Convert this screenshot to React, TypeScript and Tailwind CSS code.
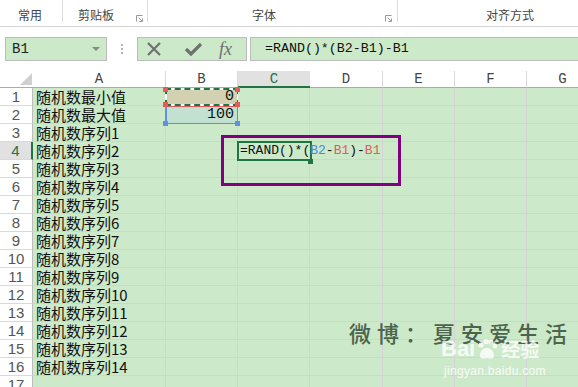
const rows = [
  "随机数最小值",
  "随机数最大值",
  "随机数序列1",
  "随机数序列2",
  "随机数序列3",
  "随机数序列4",
  "随机数序列5",
  "随机数序列6",
  "随机数序列7",
  "随机数序列8",
  "随机数序列9",
  "随机数序列10",
  "随机数序列11",
  "随机数序列12",
  "随机数序列13",
  "随机数序列14",
  "",
];

const cell = "shrink-0 h-full border-r border-b border-[#d6d1d6] bg-[#cce9c9] relative";

function Launcher() {
  return (
    <svg width="7" height="7" viewBox="0 0 7 7" className="shrink-0">
      <path d="M0.5 6.5V0.5H6.5" stroke="#9a9a9a" fill="none" />
      <path d="M2.5 2.5L6 6M3.5 6.5H6.5V3.5" stroke="#9a9a9a" fill="none" />
    </svg>
  );
}

function Corner({ c, pos }: { c: string; pos: string }) {
  return <div className={`absolute w-[5px] h-[5px] z-20 ${c} ${pos}`} />;
}

export default function App() {
  const mono = "font-['Liberation_Mono',monospace]";
  return (
    <div className="w-[578px] h-[387px] overflow-hidden bg-white relative font-['Noto_Sans_CJK_SC',sans-serif] text-[#333]">
      {/* ribbon group labels */}
      <div className="h-[27px] border-b border-[#d4d4d4] flex text-[12px] text-[#444] leading-[17px]">
        <div className="w-[63px] h-[22px] border-r border-[#dcdcdc] pl-[18px] pt-[6px]">常用</div>
        <div className="w-[85px] h-[22px] border-r border-[#dcdcdc] pl-[15px] pt-[6px] flex">
          <span>剪贴板</span>
          <div className="ml-auto mr-[4px] mt-[9px]">
            <Launcher />
          </div>
        </div>
        <div className="w-[250px] h-[22px] border-r border-[#dcdcdc] pl-[104px] pt-[6px] flex">
          <span>字体</span>
          <div className="ml-auto mr-[5px] mt-[9px]">
            <Launcher />
          </div>
        </div>
        <div className="flex-1 h-[22px] pl-[88px] pt-[6px]">对齐方式</div>
      </div>

      {/* formula bar */}
      <div className="mt-[10px] h-[24px] flex">
        <div className="ml-[5px] w-[102px] h-full border border-[#bcbcbc] bg-[#cce9c9] flex items-center pl-[6px] pr-[6px]">
          <span className={`${mono} text-[14px] text-[#222]`}>B1</span>
          <svg width="8" height="5" viewBox="0 0 8 5" className="ml-auto">
            <path d="M0 0H8L4 4Z" fill="#8a8a8a" />
          </svg>
        </div>
        <div className="w-[30px] h-full flex flex-col items-center justify-center gap-[2px]">
          <div className="w-[2px] h-[2px] bg-[#b5b5b5]" />
          <div className="w-[2px] h-[2px] bg-[#b5b5b5]" />
          <div className="w-[2px] h-[2px] bg-[#b5b5b5]" />
        </div>
        <div className="w-[110px] h-full border border-[#bcbcbc] bg-[#cce9c9] flex items-center">
          <svg width="16" height="16" viewBox="0 0 16 16" className="ml-[8px]">
            <path d="M2 2L14 14M14 2L2 14" stroke="#707070" strokeWidth="2.2" />
          </svg>
          <svg width="19" height="16" viewBox="0 0 19 16" className="ml-[22px]">
            <path d="M2 8L7 13L17 3" stroke="#707070" strokeWidth="3.2" fill="none" />
          </svg>
          <span className="ml-[16px] font-['Liberation_Serif',serif] italic text-[18px] text-[#707070] leading-none">fx</span>
        </div>
        <div className="ml-[3px] flex-1 h-full border-y border-l border-[#bcbcbc] bg-[#cce9c9] flex items-center pl-[14px]">
          <span className={`${mono} text-[13.3px] text-[#111]`}>=RAND()*(B2-B1)-B1</span>
        </div>
      </div>

      {/* sheet */}
      <div className="mt-[10px]">
        <div className={`h-[17px] flex ${mono} text-[14px] text-[#444] leading-[16px]`}>
          <div className="w-[33px] shrink-0 h-full border-b border-[#ababab] flex items-end justify-end pr-[1px] pb-[2px]">
            <svg width="12" height="12" viewBox="0 0 12 12">
              <path d="M12 0V12H0Z" fill="#d0d0d0" />
            </svg>
          </div>
          {[
            ["A", "w-[133px]"],
            ["B", "w-[72px]"],
            ["C", "w-[72px]"],
            ["D", "w-[73px]"],
            ["E", "w-[72px]"],
            ["F", "w-[72px]"],
            ["G", "w-[72px]"],
          ].map(([k, w]) =>
            k === "C" ? (
              <div key={k} className={`${w} shrink-0 h-full bg-[#e1e1e1] text-[#217346] border-b-2 border-[#217346] text-center`}>
                {k}
              </div>
            ) : (
              <div key={k} className={`${w} shrink-0 h-full border-r border-[#d9d9d9] border-b border-b-[#ababab] text-center`}>
                {k}
              </div>
            )
          )}
        </div>

        {rows.map((label, i) => {
          const n = i + 1;
          return (
            <div key={n} className="h-[18px] flex leading-[17px]">
              {n === 4 ? (
                <div className="w-[33px] shrink-0 h-full bg-[#e1e1e1] text-[#217346] border-r-2 border-[#217346] border-b border-b-[#d9d9d9] text-center font-['Liberation_Sans',sans-serif] text-[15px]">
                  {n}
                </div>
              ) : (
                <div className="w-[33px] shrink-0 h-full bg-white text-[#555] border-r border-[#bdbdbd] border-b border-b-[#d9d9d9] text-center font-['Liberation_Sans',sans-serif] text-[15px]">
                  {n}
                </div>
              )}
              <div className={`${cell} w-[133px] pl-[3px] text-[15px] text-[#111] whitespace-nowrap`}>{label}</div>
              {n === 1 ? (
                <div className={`${cell} w-[72px] !bg-[#d2d2b2]`}>
                  <div className="absolute left-[-1px] top-0 w-[74px] h-[18px] border-2 border-white" />
                  <div className="absolute left-[-1px] top-0 w-[74px] h-[18px] border-2 border-dashed border-[#217346]" />
                  <span className={`absolute right-[3px] top-0 ${mono} text-[15px] text-[#111]`}>0</span>
                  <Corner c="bg-[#e85a5a]" pos="left-[-3px] top-[-1px]" />
                  <Corner c="bg-[#e85a5a]" pos="right-[-3px] top-[-1px]" />
                  <Corner c="bg-[#e85a5a]" pos="left-[-3px] bottom-[-2px]" />
                  <Corner c="bg-[#e85a5a]" pos="right-[-3px] bottom-[-2px]" />
                </div>
              ) : n === 2 ? (
                <div className={`${cell} w-[72px] !bg-[#c2e1d1]`}>
                  <div className="absolute left-[-1px] top-0 w-[74px] h-[19px] border-2 border-t-0 border-[#5f8fe6]" />
                  <div className="absolute left-0 top-0 w-[72px] h-[1px] bg-[#e85a5a]" />
                  <span className={`absolute right-[3px] top-0 ${mono} text-[15px] text-[#111]`}>100</span>
                  <Corner c="bg-[#5f8fe6]" pos="left-[-3px] bottom-[-3px]" />
                  <Corner c="bg-[#5f8fe6]" pos="right-[-3px] bottom-[-3px]" />
                </div>
              ) : (
                <div className={`${cell} w-[72px]`} />
              )}
              {n === 4 ? (
                <div className={`${cell} w-[72px] z-10`}>
                  <div className="absolute left-[-1px] top-[-1px] w-[75px] h-[20px] border-2 border-[#217346]" />
                  <div className="absolute left-[70px] top-[17px] w-[5px] h-[5px] bg-[#217346]" />
                  <span className={`absolute left-[2px] top-0 whitespace-nowrap ${mono} text-[13px] text-[#111]`}>
                    =RAND()*(<span className="text-[#4f86e3]">B2</span>-<span className="text-[#e45b5b]">B1</span>)-
                    <span className="text-[#e45b5b]">B1</span>
                  </span>
                </div>
              ) : (
                <div className={`${cell} w-[72px]`} />
              )}
              <div className={`${cell} w-[73px]`} />
              <div className={`${cell} w-[72px]`} />
              <div className={`${cell} w-[72px]`} />
              <div className={`${cell} w-[72px]`} />
            </div>
          );
        })}
      </div>

      {/* annotation box */}
      <div className="absolute left-[221px] top-[135px] w-[180px] h-[51px] border-[3px] border-[#800080] z-30" />

      {/* watermark */}
      <div className="absolute left-[349px] top-[318px] text-[22px] tracking-[6px] text-[#4c634c] font-medium whitespace-nowrap z-30 leading-[28px]">
        微博：夏安爱生活
      </div>
      <div className="absolute left-[441px] top-[337px] flex items-center text-white/80 z-30 font-['Liberation_Sans',sans-serif] font-bold text-[22px] leading-[24px]">
        <span>Bai</span>
        <svg width="22" height="22" viewBox="0 0 22 22" className="mx-[1px]">
          <circle cx="5" cy="7" r="2.6" fill="white" fillOpacity="0.8" />
          <circle cx="10" cy="3.5" r="2.6" fill="white" fillOpacity="0.8" />
          <circle cx="15" cy="4" r="2.6" fill="white" fillOpacity="0.8" />
          <circle cx="19" cy="8" r="2.4" fill="white" fillOpacity="0.8" />
          <path d="M4 18C4 12 8 10 11 10C14 10 18 12 18 18C18 21 14 21 11 20C8 21 4 21 4 18Z" fill="white" fillOpacity="0.8" />
        </svg>
        <span className="font-['Noto_Sans_CJK_SC',sans-serif] text-[19px] ml-[2px]">经验</span>
      </div>
      <div className="absolute left-[444px] top-[362px] text-[12px] text-white/85 font-['Liberation_Sans',sans-serif] z-30 tracking-[0.3px]">
        jingyan.baidu.com
      </div>
    </div>
  );
}
